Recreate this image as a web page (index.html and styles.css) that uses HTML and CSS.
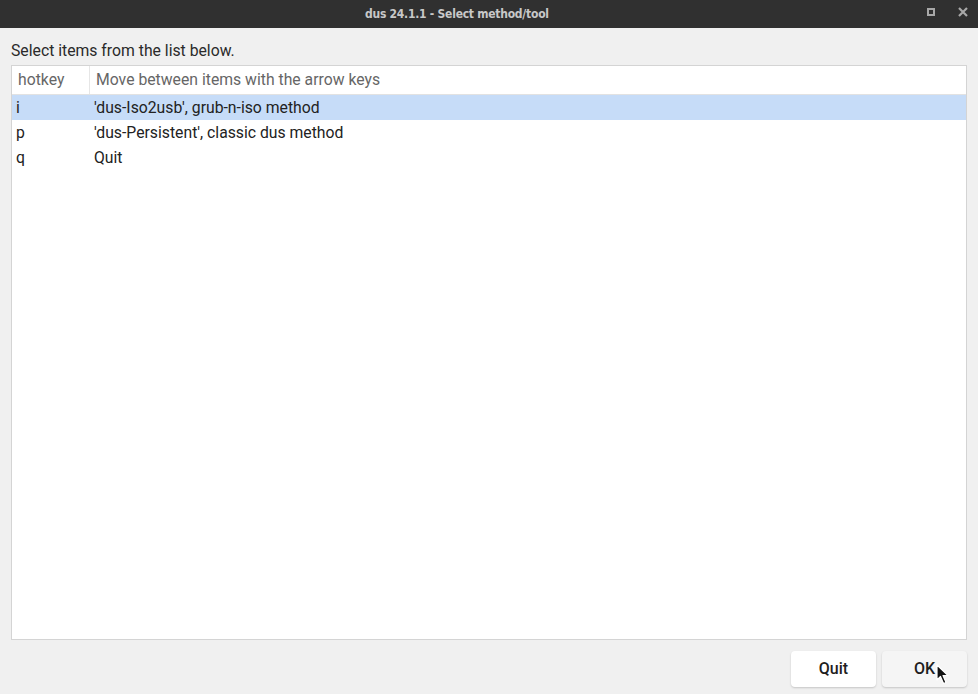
FILE: index.html
```html
<!DOCTYPE html>
<html>
<head>
<meta charset="utf-8">
<link rel="stylesheet" href="styles.css">
</head>
<body>
<div class="window">
  <div class="titlebar">
    <span class="title">dus 24.1.1 - Select method/tool</span>
    <div class="controls">
      <svg class="ctl" width="8" height="8" viewBox="0 0 8 8"><rect x="1" y="1" width="6" height="6" fill="none" stroke="#a8a8a8" stroke-width="2"/></svg>
      <svg class="ctl" width="10" height="10" viewBox="0 0 10 10"><path d="M1 1 L9 9 M9 1 L1 9" stroke="#a8a8a8" stroke-width="2.2"/></svg>
    </div>
  </div>
  <div class="content">
    <div class="prompt">Select items from the list below.</div>
    <div class="list">
      <div class="head">
        <div class="hcell c1">hotkey</div>
        <div class="hcell c2">Move between items with the arrow keys</div>
      </div>
      <div class="row selected"><div class="cell c1">i</div><div class="cell c2">'dus-Iso2usb', grub-n-iso method</div></div>
      <div class="row"><div class="cell c1">p</div><div class="cell c2">'dus-Persistent', classic dus method</div></div>
      <div class="row"><div class="cell c1">q</div><div class="cell c2">Quit</div></div>
    </div>
    <div class="buttons">
      <button class="btn">Quit</button>
      <button class="btn hover">OK</button>
    </div>
  </div>
  <svg class="cursor" width="14" height="22" viewBox="0 0 14 22"><path d="M1 1 L1 16 L4.5 12.5 L7.5 19.5 L10 18.5 L7 11.5 L12 11.5 Z" fill="#111" stroke="#fff" stroke-width="1.2" stroke-linejoin="round"/></svg>
</div>
</body>
</html>
```
FILE: styles.css
```css
html, body {
  margin: 0;
  padding: 0;
  width: 978px;
  height: 694px;
  overflow: hidden;
  background: #f0f0f0;
  font-family: Roboto, "Noto Sans", sans-serif;
}
.window {
  position: relative;
  width: 978px;
  height: 694px;
  display: flex;
  flex-direction: column;
}
.titlebar {
  height: 28px;
  background: #303030;
  display: flex;
  align-items: center;
  padding-left: 365px;
  box-sizing: border-box;
  position: relative;
  flex: none;
}
.title {
  color: #c8c8c8;
  font-family: "DejaVu Sans Condensed", "DejaVu Sans", sans-serif;
  font-weight: bold;
  font-size: 12px;
  letter-spacing: -0.25px;
}
.controls {
  position: absolute;
  right: 10px;
  top: 8px;
  display: flex;
  gap: 23px;
  align-items: center;
  height: 8px;
}
.content {
  flex: 1;
  display: flex;
  flex-direction: column;
  padding: 0 11px 0 11px;
}
.prompt {
  font-size: 15.75px;
  color: #2a2a2a;
  margin-top: 13px;
  height: 19px;
  line-height: 19px;
}
.list {
  margin-top: 5px;
  height: 575px;
  background: #fff;
  border: 1px solid #d4d4d4;
  box-sizing: border-box;
  flex: none;
}
.head {
  display: flex;
  height: 29px;
  border-bottom: 1px solid #e2e2e2;
  box-sizing: border-box;
}
.hcell {
  font-size: 15.75px;
  color: #666;
  line-height: 28px;
  padding-left: 6px;
  box-sizing: border-box;
}
.hcell.c1 {
  width: 78px;
  border-right: 1px solid #e6e6e6;
}
.row {
  display: flex;
  height: 25px;
  font-size: 15.75px;
  color: #222;
  line-height: 26px;
}
.row.selected {
  background: #c6dcf8;
}
.cell {
  padding-left: 4px;
  box-sizing: border-box;
}
.cell.c1 { width: 78px; }
.buttons {
  display: flex;
  justify-content: flex-end;
  gap: 6px;
  margin-top: 11px;
}
.btn {
  width: 85px;
  height: 36px;
  border: none;
  border-radius: 4px;
  background: #fff;
  box-shadow: 0 1px 2px rgba(0,0,0,0.18);
  font-family: Roboto, sans-serif;
  font-weight: 500;
  font-size: 16px;
  color: #1e1e1e;
  padding: 0 0 1px 0;
}
.btn.hover { background: #f5f5f5; }
.cursor {
  position: absolute;
  left: 936px;
  top: 664px;
}
```
